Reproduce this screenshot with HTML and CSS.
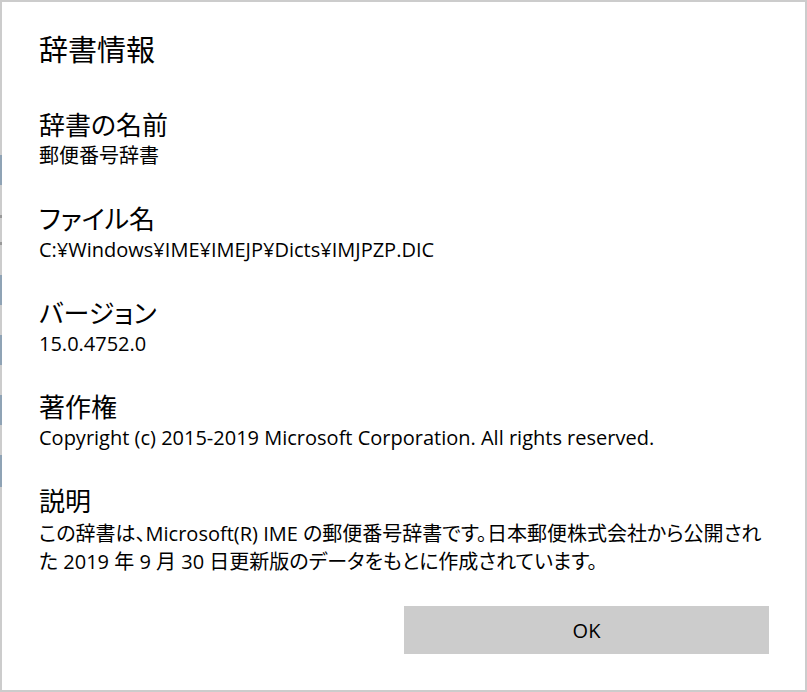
FILE: index.html
```html
<!DOCTYPE html>
<html lang="ja">
<head>
<meta charset="utf-8">
<title>辞書情報</title>
<link rel="stylesheet" href="styles.css">
</head>
<body>
<div class="dialog">
  <h1 class="title">辞書情報</h1>
  <div class="sections">
    <section class="section">
      <h2 class="label">辞書の名前</h2>
      <p class="value">郵便番号辞書</p>
    </section>
    <section class="section">
      <h2 class="label">ファイル名</h2>
      <p class="value">C:¥Windows¥IME¥IMEJP¥Dicts¥IMJPZP.DIC</p>
    </section>
    <section class="section">
      <h2 class="label">バージョン</h2>
      <p class="value">15.0.4752.0</p>
    </section>
    <section class="section">
      <h2 class="label">著作権</h2>
      <p class="value">Copyright (c) 2015-2019 Microsoft Corporation. All rights reserved.</p>
    </section>
    <section class="section">
      <h2 class="label">説明</h2>
      <p class="value description">この辞書は、Microsoft(R) IME の郵便番号辞書です。日本郵便株式会社から公開された 2019 年 9 月 30 日更新版のデータをもとに作成されています。</p>
    </section>
  </div>
  <div class="actions">
    <button class="ok-button" type="button">OK</button>
  </div>
</div>
</body>
</html>
```

FILE: styles.css
```css
html, body {
  margin: 0;
  padding: 0;
  background: #ffffff;
}

body {
  font-family: "Open Sans", "Noto Sans CJK JP", sans-serif;
  font-feature-settings: "palt";
  color: #000000;
}

.dialog {
  box-sizing: border-box;
  width: 807px;
  height: 692px;
  border: 2px solid #cccccc;
  padding: 28px 36px 36px 37px;
  display: flex;
  flex-direction: column;
  position: relative;
}

.dialog::before {
  content: "";
  position: absolute;
  left: -2px;
  top: 153px;
  width: 2px;
  height: 332px;
  background: linear-gradient(to bottom,
    #8fa3b5 0, #8fa3b5 30px,
    #cccccc 30px, #cccccc 60px,
    #999999 60px, #999999 63px,
    #cccccc 63px, #cccccc 87px,
    #999999 87px, #999999 90px,
    #cccccc 90px, #cccccc 120px,
    #8fa3b5 120px, #8fa3b5 150px,
    #cccccc 150px, #cccccc 180px,
    #8fa3b5 180px, #8fa3b5 210px,
    #cccccc 210px, #cccccc 240px,
    #8fa3b5 240px, #8fa3b5 270px,
    #cccccc 270px, #cccccc 300px,
    #8fa3b5 300px, #8fa3b5 332px);
}

.title {
  margin: 0 0 38px;
  font-size: 29px;
  line-height: 40px;
  font-weight: 400;
}

.sections {
  display: flex;
  flex-direction: column;
  gap: 32px;
}

.section {
  margin: 0;
}

.label {
  margin: 0;
  font-size: 26px;
  line-height: 34px;
  font-weight: 400;
}

.value {
  margin: 0;
  font-size: 20px;
  line-height: 28px;
}

.description {
  padding-top: 2px;
}

.actions {
  margin-top: auto;
  display: flex;
  justify-content: flex-end;
}

.ok-button {
  width: 365px;
  height: 48px;
  border: none;
  background: #cccccc;
  font-family: "Open Sans", "Noto Sans CJK JP", sans-serif;
  font-size: 20px;
  color: #000000;
  padding: 0;
}
```
